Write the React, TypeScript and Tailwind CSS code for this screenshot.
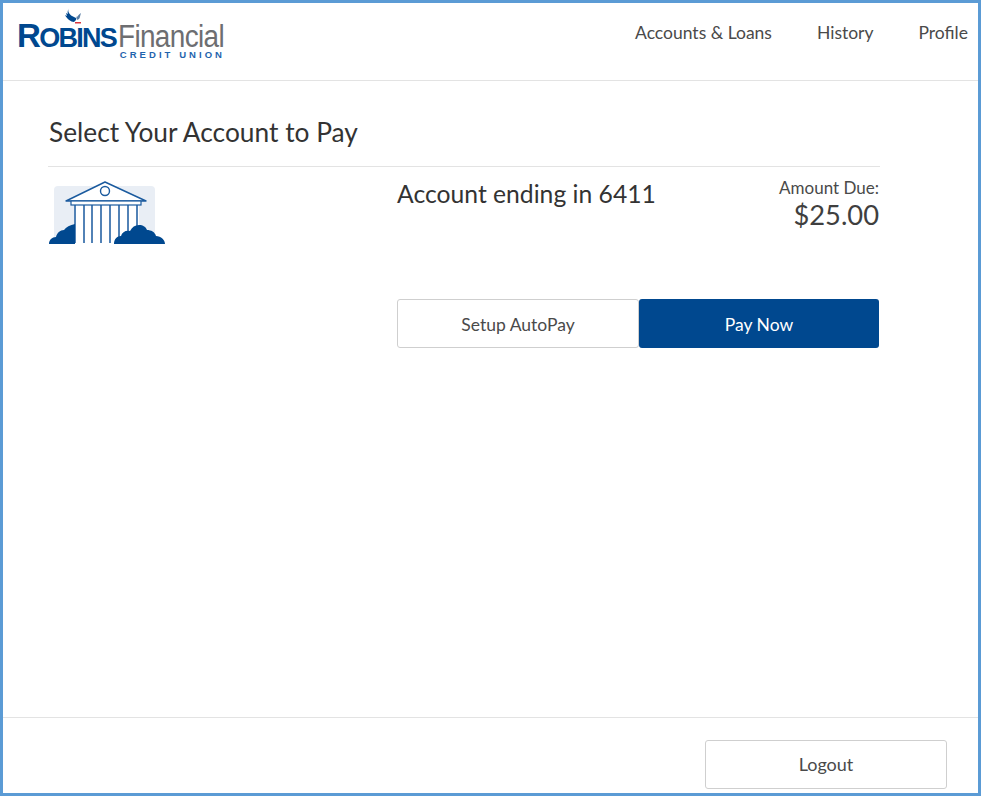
const NAV_ITEMS = ["Accounts & Loans", "History", "Profile"];

// Robins Financial wordmark, with the bird drawn above the "I"
function Logo() {
  return (
    <div className="relative w-[206px] h-[56px] mt-[5px] ml-[16px] font-['Liberation_Sans',sans-serif]">
      <svg className="absolute left-[46px] top-[0px] w-[16px] h-[17px]" viewBox="0 0 16 17">
        <path d="M4 0c-1 2-1 3 0 5 1 2 3 3 5 4l2 1 1-2-1 4-2 2C6 14 2 11 0 7l2 1-1-3 2 1C2 4 3 2 4 0z" fill="#00488f" />
        <path d="M12 9c1-1 2-3 4-4-1 3-1 5-2 6l-2 1z" fill="#5b7fa6" />
        <path d="M10 14h6v1.5h-6z" fill="#d9363e" />
      </svg>
      <div className="absolute -left-[2px] top-[13px] flex items-baseline whitespace-nowrap">
        <span className="text-[33px] leading-[30px] font-bold text-[#00488f] tracking-[-1.5px]">R</span>
        <span className="text-[27px] leading-[30px] font-bold text-[#00488f] tracking-[-1.8px]">OBINS</span>
        <span className="inline-block scale-x-[0.9] origin-left ml-[2px] text-[31px] leading-[30px] text-[#6d6e71] tracking-[-0.7px]">Financial</span>
      </div>
      <div className="absolute right-0 top-[43px] text-[9.5px] leading-[8px] font-bold text-[#1f64ad] tracking-[3.05px] whitespace-nowrap">
        CREDIT UNION
      </div>
    </div>
  );
}

// Bank building with shrubs on a pale card
function BankIllustration() {
  return (
    <svg className="w-[118px] h-[64px]" viewBox="0 0 118 64">
      <rect x="6" y="5" width="101" height="57" rx="4" fill="#e9eef5" />
      <path d="M26 22h65v41H26z" fill="#fff" />
      <path d="M57 1 18 20h80z" fill="#fff" stroke="#1a5a9e" strokeWidth="1.4" strokeLinejoin="round" />
      <circle cx="57" cy="10" r="4.5" fill="#fff" stroke="#1a5a9e" strokeWidth="1.4" />
      <rect x="23" y="20" width="70" height="4" fill="#fff" stroke="#1a5a9e" strokeWidth="1.2" />
      <path d="M27 24v38M36 24v38M44 24v38M53 24v38M62 24v38M71 24v38M80 24v38M89 24v38" stroke="#1a5a9e" strokeWidth="1.5" />
      <path d="M1 63c0-4 3-7 7-7 1-4 4-7 8-7 2-3 6-5 11-6v20z" fill="#00488f" />
      <path d="M66 63c0-5 3-8 7-8 1-4 5-6 9-5 2-4 5-6 9-6 4 0 7 2 8 5 4 0 8 2 9 6 5 0 9 4 9 8z" fill="#00488f" />
    </svg>
  );
}

export default function App() {
  return (
    <div className="w-[981px] h-[796px] flex flex-col border-[3px] border-[#5b9bd5] bg-white text-[#3f3f3f] font-['Lato',sans-serif]">
      {/* Header */}
      <header className="h-[78px] shrink-0 flex justify-between border-b border-[#e3e3e3]">
        <Logo />
        <nav className="flex gap-[45px] pt-[20px] pr-[10px] text-[17.5px] leading-[20px] text-[#4a4a4a]">
          {NAV_ITEMS.map((item) => (
            <span key={item}>{item}</span>
          ))}
        </nav>
      </header>

      {/* Account list */}
      <main className="flex-1 pl-[45px] pr-[98px]">
        <h1 className="pt-[36px] pb-[18px] pl-[1px] text-[26.3px] leading-[31px] text-[#333] border-b border-[#e3e3e3]">
          Select Your Account to Pay
        </h1>
        <div className="flex pt-[14px] pr-[1px]">
          <div className="w-[349px] shrink-0">
            <BankIllustration />
          </div>
          <div className="flex-1">
            <div className="flex justify-between">
              <div className="-mt-[1px] text-[24.7px] leading-[28px] text-[#333]">Account ending in 6411</div>
              <div className="text-right -mt-[2px]">
                <div className="text-[17px] leading-[18px] text-[#4a4a4a]">Amount Due:</div>
                <div className="text-[27.3px] leading-[36px] text-[#3f3f3f]">$25.00</div>
              </div>
            </div>
            <div className="flex mt-[66px] text-[17.5px]">
              <button className="flex-1 h-[49px] pt-[4px] bg-white border border-[#cfcfcf] rounded-[3px] text-[#4a4a4a]">
                Setup AutoPay
              </button>
              <button className="flex-1 h-[49px] pt-[4px] bg-[#00488f] rounded-[3px] text-white">Pay Now</button>
            </div>
          </div>
        </div>
      </main>

      {/* Footer */}
      <footer className="h-[76px] shrink-0 flex justify-end border-t border-[#e3e3e3] pt-[22px] pr-[31px]">
        <button className="w-[242px] h-[49px] bg-white border border-[#cfcfcf] rounded-[3px] text-[18px] text-[#4a4a4a]">
          Logout
        </button>
      </footer>
    </div>
  );
}
